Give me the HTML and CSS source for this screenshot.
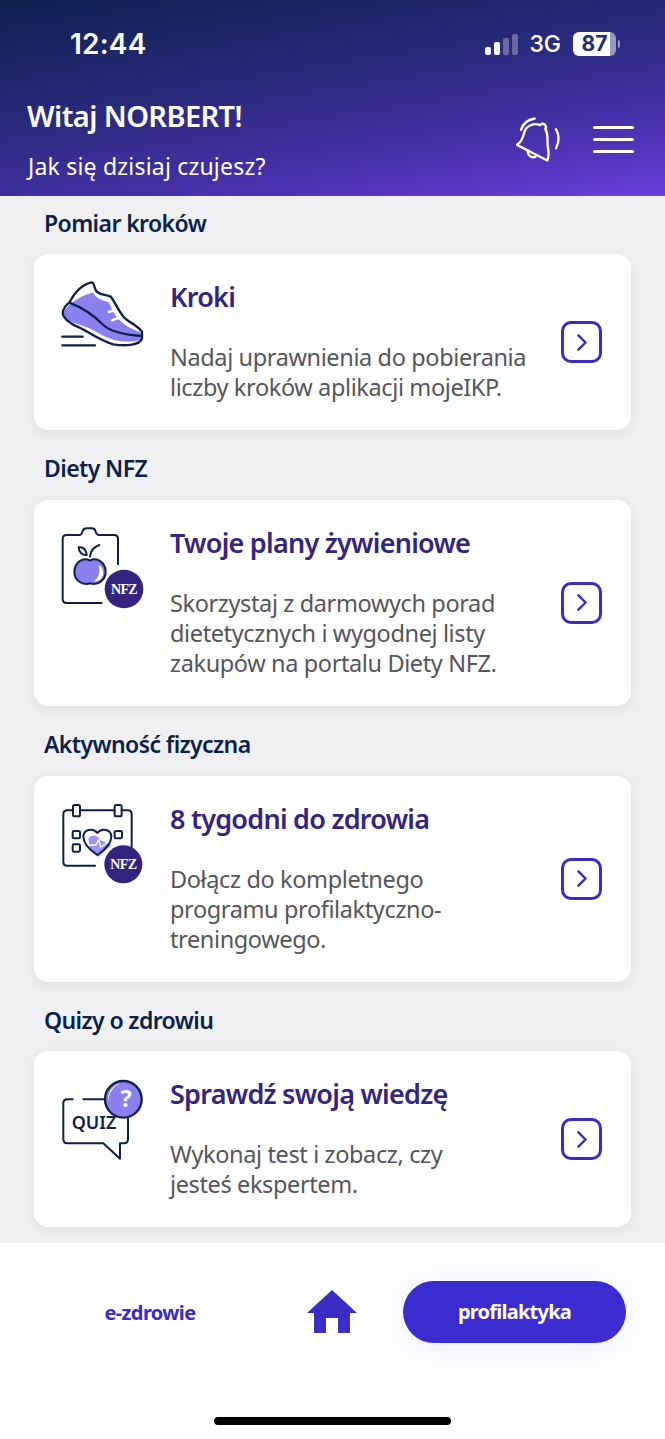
FILE: index.html
```html
<!DOCTYPE html>
<html lang="pl">
<head>
<meta charset="utf-8">
<title>mojeIKP</title>
<link rel="stylesheet" href="styles.css">
</head>
<body>
<div class="page">
  <header class="header">
    <div class="status">
      <span class="time">12:44</span>
      <div class="status-right">
        <div class="signal"><i class="bar bar1"></i><i class="bar bar2"></i><i class="bar bar3"></i><i class="bar bar4"></i></div>
        <span class="net">3G</span>
        <div class="battery"><span class="battery-body">87</span><i class="battery-nub"></i></div>
      </div>
    </div>
    <div class="greeting">
      <div>
        <h1 class="hello">Witaj NORBERT!</h1>
        <p class="feel">Jak się dzisiaj czujesz?</p>
      </div>
      <div class="actions">
        <svg class="bell" viewBox="50 50 135 135" fill="none" stroke="#fff" stroke-width="7" stroke-linecap="round" stroke-linejoin="round">
          <path d="M52 135C68 127 72 110 75 97C80 78 105 68 122 76C126 70 136 70 139 78C141 83 139 86 138 88C148 105 143 120 145 135C146 150 152 165 144 182Z"/>
          <path d="M85 152C85 172 105 178 113 166"/>
          <path d="M65 90C70 72 85 60 106 56"/>
          <path d="M170 88C180 105 180 125 170 146"/>
        </svg>
        <div class="burger"><i></i><i></i><i></i></div>
      </div>
    </div>
  </header>

  <main class="main">
    <section class="section">
      <h2 class="section-title">Pomiar kroków</h2>
      <article class="card">
        <svg class="icon" viewBox="90 60 255 255" fill="none" stroke="#0f1f4c" stroke-width="7" stroke-linecap="round" stroke-linejoin="round">
          <path fill="#fff" stroke="none" d="M118 128C135 95 160 72 185 67C192 66 192 82 198 92C205 105 228 103 242 110C252 120 262 148 282 172C296 186 322 196 336 215V235C330 258 280 258 250 253C205 240 170 210 135 197C115 185 100 175 98 160C98 145 112 132 118 128Z"/>
          <path fill="#8b80f0" stroke="none" d="M132 124C155 108 175 100 190 98C198 118 222 120 238 128C248 160 272 198 332 216V240C290 250 250 244 215 225C185 205 155 195 130 188C112 178 102 168 101 158C104 148 118 134 132 124Z"/>
          <path d="M118 128C135 95 160 72 185 67C192 66 192 82 198 92C205 105 228 103 242 110C252 120 262 148 282 172C296 186 322 196 336 215V235C330 258 280 258 250 253C205 240 170 210 135 197C115 185 100 175 98 160C98 145 112 132 118 128Z"/>
          <path d="M118 128C150 140 190 165 220 195C245 218 290 225 336 228"/>
          <path stroke="#fff" stroke-width="7" d="M236 156L258 150M246 181L268 173"/>
          <path d="M97 230H158M97 256H195"/>
        </svg>
        <div class="card-text">
          <h3 class="card-title">Kroki</h3>
          <p class="card-desc">Nadaj uprawnienia do pobierania liczby kroków aplikacji mojeIKP.</p>
        </div>
        <div class="go"><svg class="chevron" viewBox="0 0 14 24" fill="none" stroke="#3a2cc4" stroke-width="3.4" stroke-linecap="round" stroke-linejoin="round"><path d="M2 2L12 12L2 22"/></svg></div>
      </article>
    </section>

    <section class="section">
      <h2 class="section-title">Diety NFZ</h2>
      <article class="card">
        <svg class="icon" viewBox="60 33 255 255" fill="none" stroke="#0f1f4c" stroke-width="6" stroke-linecap="round" stroke-linejoin="round">
          <path d="M185 264H80Q68 264 68 252V72Q68 60 80 60H118Q125 60 127 50Q130 40 140 40H155Q165 40 167 50Q170 60 178 60H222Q234 60 234 72V148"/>
          <path fill="#8b80f0" d="M150 137C135 128 105 135 103 170C103 195 125 212 150 205C175 212 197 195 197 170C195 135 165 128 150 137Z"/>
          <path fill="#fff" stroke="none" d="M175 150C188 155 192 170 188 182C182 195 170 200 162 198C178 188 182 168 175 150Z"/>
          <path d="M116 97C125 95 138 100 140 120C128 122 116 112 116 97Z"/>
          <path d="M150 125C152 108 163 95 178 90"/>
          <circle cx="252" cy="222" r="58" fill="#33257f" stroke="none"/>
          <text class="nfz" x="252" y="236" text-anchor="middle">NFZ</text>
        </svg>
        <div class="card-text">
          <h3 class="card-title">Twoje plany żywieniowe</h3>
          <p class="card-desc">Skorzystaj z darmowych porad dietetycznych i wygodnej listy zakupów na portalu Diety NFZ.</p>
        </div>
        <div class="go"><svg class="chevron" viewBox="0 0 14 24" fill="none" stroke="#3a2cc4" stroke-width="3.4" stroke-linecap="round" stroke-linejoin="round"><path d="M2 2L12 12L2 22"/></svg></div>
      </article>
    </section>

    <section class="section">
      <h2 class="section-title">Aktywność fizyczna</h2>
      <article class="card">
        <svg class="icon" viewBox="60 21 255 255" fill="none" stroke="#0f1f4c" stroke-width="6" stroke-linecap="round" stroke-linejoin="round">
          <path d="M165 212H80Q70 212 70 202V58Q70 46 82 46H98M120 46H223M245 46H264Q275 46 275 58V160"/>
          <rect x="99" y="30" width="21" height="34" rx="5"/>
          <rect x="224" y="30" width="21" height="34" rx="5"/>
          <rect x="98" y="108" width="22" height="22" rx="4"/>
          <rect x="98" y="148" width="22" height="22" rx="4"/>
          <rect x="224" y="108" width="22" height="22" rx="4"/>
          <path fill="#8b80f0" stroke="none" opacity=".85" d="M145 132C150 118 175 120 180 135L215 150L175 186L150 160Z"/>
          <path d="M172 180C150 165 130 145 130 125C130 105 158 96 172 114C186 96 214 105 214 125C214 145 194 165 172 180Z"/>
          <path stroke="#fff" stroke-width="4" d="M150 150H168L176 134L182 156L200 144"/>
          <circle cx="250" cy="208" r="57" fill="#33257f" stroke="none"/>
          <text class="nfz" x="250" y="222" text-anchor="middle">NFZ</text>
        </svg>
        <div class="card-text">
          <h3 class="card-title">8 tygodni do zdrowia</h3>
          <p class="card-desc">Dołącz do kompletnego programu profilaktyczno-<br>treningowego.</p>
        </div>
        <div class="go"><svg class="chevron" viewBox="0 0 14 24" fill="none" stroke="#3a2cc4" stroke-width="3.4" stroke-linecap="round" stroke-linejoin="round"><path d="M2 2L12 12L2 22"/></svg></div>
      </article>
    </section>

    <section class="section">
      <h2 class="section-title">Quizy o zdrowiu</h2>
      <article class="card">
        <svg class="icon" viewBox="60 21 255 255" fill="none" stroke="#0f1f4c" stroke-width="6" stroke-linecap="round" stroke-linejoin="round">
          <path d="M98 88H82Q70 88 70 100V208Q70 220 82 220H190L240 266V220H252Q264 220 264 208V140M130 88H195"/>
          <circle cx="250" cy="88" r="55" fill="#8b80f0" stroke-width="7"/>
          <path fill="#fff" stroke="none" d="M205 95C205 65 225 48 240 40C222 45 200 65 205 95Z"/>
          <text class="qmark" x="258" y="112" text-anchor="middle">?</text>
          <text class="quiz" x="162" y="176" text-anchor="middle">QUIZ</text>
        </svg>
        <div class="card-text">
          <h3 class="card-title">Sprawdź swoją wiedzę</h3>
          <p class="card-desc">Wykonaj test i zobacz, czy<br>jesteś ekspertem.</p>
        </div>
        <div class="go"><svg class="chevron" viewBox="0 0 14 24" fill="none" stroke="#3a2cc4" stroke-width="3.4" stroke-linecap="round" stroke-linejoin="round"><path d="M2 2L12 12L2 22"/></svg></div>
      </article>
    </section>
  </main>

  <footer class="footer">
    <nav class="tabs">
      <span class="tab-link">e-zdrowie</span>
      <svg class="home" viewBox="0 0 50 44" fill="#3a2cc4"><path d="M25 0L50 23H43V43H31V28H19V43H7V23H0Z"/></svg>
      <span class="tab-pill">profilaktyka</span>
    </nav>
    <div class="home-bar"></div>
  </footer>
</div>
</body>
</html>
```

FILE: styles.css
```css
* { box-sizing: border-box; }
html, body { margin: 0; padding: 0; }
body { font-family: "Noto Sans", "Open Sans", sans-serif; background: #fff; }
h1, h2, h3, p { margin: 0; font-weight: inherit; }
.page { width: 665px; height: 1439px; display: flex; flex-direction: column; overflow: hidden; }

.header {
  height: 196px; flex: none; color: #fff;
  background: linear-gradient(171deg, #0e2050 0%, #2a2a7c 42%, #4530a8 72%, #6a3edf 100%);
}
.status { height: 88px; display: flex; align-items: center; justify-content: space-between; padding: 0 45px 0 70px; }
.time { font-family: Inter, Roboto, sans-serif; font-size: 28px; font-weight: 600; letter-spacing: .2px; }
.status-right { display: flex; align-items: center; }
.signal { display: flex; align-items: flex-end; gap: 3px; height: 21px; margin-right: 11px; }
.bar { display: block; width: 6px; border-radius: 2px; background: #fff; }
.bar1 { height: 8px; }
.bar2 { height: 13px; }
.bar3 { height: 17px; background: rgba(255,255,255,.3); }
.bar4 { height: 21px; background: rgba(255,255,255,.3); }
.net { font-family: Inter, Roboto, sans-serif; font-size: 23px; font-weight: 500; margin-right: 12px; }
.battery { display: flex; align-items: center; }
.battery-body {
  width: 43px; height: 24px; border-radius: 6px; color: #252a6e;
  background: linear-gradient(90deg, #fff 0 87%, rgba(255,255,255,.5) 87%);
  font-family: Inter, Roboto, sans-serif; font-size: 21px; font-weight: 700; line-height: 24px; text-align: center;
}
.battery-nub { width: 2px; height: 8px; margin-left: 2px; border-radius: 0 2px 2px 0; background: rgba(255,255,255,.5); }

.greeting { display: flex; justify-content: space-between; padding: 0 31px 0 27px; }
.hello { font-size: 29px; font-weight: 600; line-height: 32px; margin-top: 12px; letter-spacing: -.6px; white-space: nowrap; }
.feel { font-size: 23px; line-height: 30px; margin-top: 19px; padding-left: 1px; letter-spacing: .2px; white-space: nowrap; }
.actions { display: flex; align-items: center; gap: 32px; height: 48px; margin-top: 27px; }
.bell { width: 45px; height: 48px; }
.burger { width: 41px; display: flex; flex-direction: column; gap: 9px; }
.burger i { display: block; height: 3px; border-radius: 2px; background: #fff; }

.main { flex: 1; min-height: 0; background: #f0f0f2; padding-top: 11.5px; overflow: hidden; }
.section { padding: 0 34px; margin-bottom: 23.25px; }
.section-title { font-size: 23px; font-weight: 600; line-height: 30px; color: #0c1f4a; padding-left: 10px; margin-bottom: 16.5px; letter-spacing: -.6px; }
.card {
  display: flex; align-items: center; background: #fff; border-radius: 14px;
  box-shadow: 0 3px 12px rgba(0,0,0,.07); padding: 0 29px 0 26px;
}
.icon { width: 85px; height: 85px; flex: none; align-self: flex-start; margin-top: 26px; }
.card-text { width: 358px; padding: 26px 0 28px; margin-left: 25px; }
.card-title { font-size: 27px; font-weight: 600; line-height: 34px; color: #33247f; margin-bottom: 28px; letter-spacing: -.75px; white-space: nowrap; }
.card-desc { font-size: 23.5px; line-height: 30px; color: #55555b; letter-spacing: -.38px; }
.go {
  width: 41px; height: 42px; flex: none; margin-left: auto; border: 3px solid #3a2cc4; border-radius: 10px;
  display: flex; align-items: center; justify-content: center;
}
.chevron { width: 10px; height: 19px; }
.nfz { font-family: "Liberation Serif", serif; font-size: 42px; font-weight: 700; fill: #fff; stroke: none; letter-spacing: -2px; }
.qmark { font-family: "Noto Sans", sans-serif; font-size: 70px; font-weight: 700; fill: #fff; stroke: none; }
.quiz { font-family: "Noto Sans", sans-serif; font-size: 54px; font-weight: 600; fill: #0f1f4c; stroke: none; }

.footer { height: 196px; flex: none; background: #fff; position: relative; z-index: 1; }
.tabs { display: flex; align-items: center; height: 62px; margin-top: 38px; padding: 0 39px 0 0; }
.tab-link { width: 300px; text-align: center; font-size: 20px; font-weight: 700; color: #3a2cc4; letter-spacing: -.6px; }
.home { width: 50px; height: 44px; flex: none; margin-left: 7px; }
.tab-pill {
  width: 223px; height: 62px; margin-left: 46px; border-radius: 31px; background: #3a2cd0; color: #fff;
  font-size: 20px; font-weight: 700; line-height: 62px; text-align: center; letter-spacing: -.75px;
  box-shadow: 0 4px 40px rgba(60,90,220,.12);
}
.home-bar { width: 237px; height: 8px; border-radius: 4px; background: #000; margin: 74px 0 0 214px; }
```
